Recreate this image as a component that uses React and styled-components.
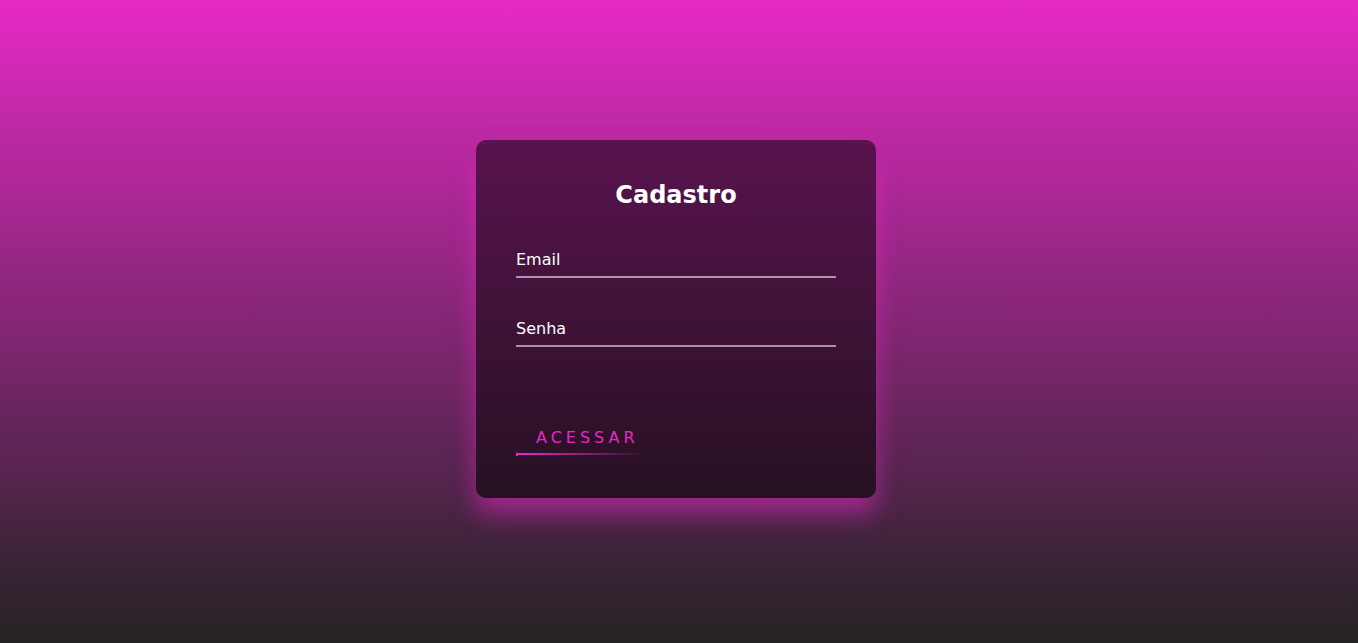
import React from "react";
import styled, { createGlobalStyle } from "styled-components";

const GlobalStyle = createGlobalStyle`
  * { box-sizing: border-box; }
  html, body { margin: 0; padding: 0; }
  body {
    font-family: "DejaVu Sans", Verdana, sans-serif;
    background: linear-gradient(#e52ac6, #232323);
    min-height: 100vh;
  }
`;

const Page = styled.main`
  min-height: 100vh;
  display: flex;
  align-items: center;
  justify-content: center;
  padding: 0 6px 5px 0;
`;

const Card = styled.form`
  width: 400px;
  padding: 40px 40px 43px;
  background: rgba(0, 0, 0, 0.52);
  border-radius: 10px;
  box-shadow: 0 15px 25px rgba(229, 42, 198, 0.55);
  display: flex;
  flex-direction: column;
`;

const Title = styled.h2`
  margin: 0 0 32px;
  padding-top: 2px;
  font-size: 24px;
  line-height: 26px;
  font-weight: bold;
  color: #fff;
  text-align: center;
`;

const Field = styled.label`
  display: block;
  padding: 10px 0 7px;
  margin-bottom: ${(p) => p.$gap}px;
  font-size: 16px;
  line-height: 19px;
  color: #fff;
  border-bottom: 2px solid rgba(255, 255, 255, 0.55);
`;

const ButtonLink = styled.a`
  position: relative;
  align-self: flex-start;
  display: inline-block;
  padding: 11px 20px 8px;
  font-size: 16px;
  line-height: 19px;
  letter-spacing: 4px;
  text-transform: uppercase;
  color: #e52ac6;
  text-decoration: none;
  cursor: pointer;
`;

const BottomLine = styled.span`
  position: absolute;
  left: 0;
  bottom: 0;
  width: 100%;
  height: 2px;
  background: linear-gradient(90deg, #e52ac6, rgba(229, 42, 198, 0.5) 50%, transparent 92%);
`;

const LeftTick = styled.span`
  position: absolute;
  left: 0;
  bottom: -1px;
  width: 2px;
  height: 5px;
  background: linear-gradient(180deg, transparent, #e52ac6);
`;

export default function App() {
  return (
    <>
      <GlobalStyle />
      <Page>
        <Card onSubmit={(e) => e.preventDefault()}>
          <Title>Cadastro</Title>
          <Field $gap={31}>Email</Field>
          <Field $gap={70}>Senha</Field>
          <ButtonLink>
            <BottomLine />
            <LeftTick />
            Acessar
          </ButtonLink>
        </Card>
      </Page>
    </>
  );
}
